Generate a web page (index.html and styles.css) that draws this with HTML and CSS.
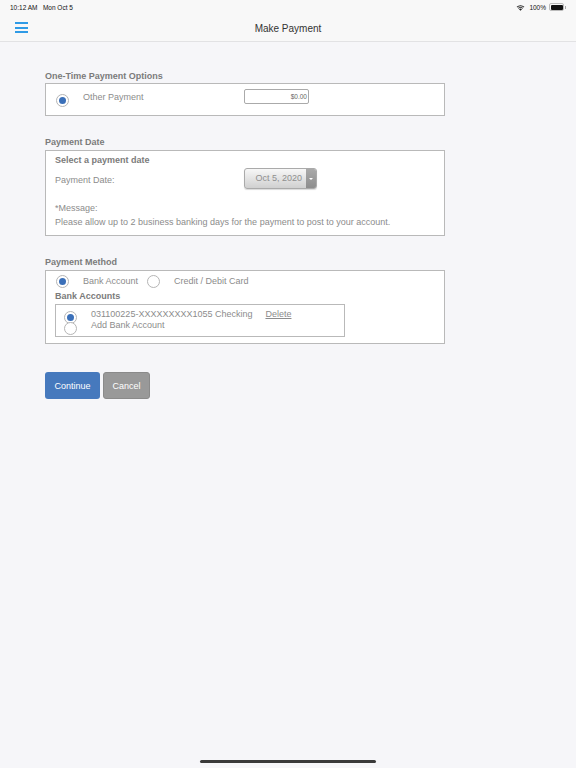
FILE: index.html
```html
<!DOCTYPE html>
<html>
<head>
<meta charset="utf-8">
<link rel="stylesheet" href="styles.css">
</head>
<body>
<div class="status">
  <span class="time">10:12 AM&nbsp;&nbsp;&nbsp;Mon Oct 5</span>
  <span class="status-right">
    <svg class="wifi" width="9" height="7" viewBox="0 0 18 14"><path d="M9 13.5 L6 10.3 A4.4 4.4 0 0 1 12 10.3 Z" fill="#222"/><path d="M3.9 8.2 A7.4 7.4 0 0 1 14.1 8.2 L12.8 9.5 A5.6 5.6 0 0 0 5.2 9.5 Z" fill="#222"/><path d="M1.3 5.6 A11 11 0 0 1 16.7 5.6 L15.4 6.9 A9.2 9.2 0 0 0 2.6 6.9 Z" fill="#222"/></svg>
    <span class="batt-text">100%</span>
    <span class="battery"><span class="battery-fill"></span></span><span class="battery-cap"></span>
  </span>
</div>
<div class="navbar">
  <div class="hamburger"><span></span><span></span><span></span></div>
  <div class="nav-title">Make Payment</div>
</div>
<main class="content">
  <div class="section-label first">One-Time Payment Options</div>
  <div class="box box-options">
    <span class="radio checked"></span>
    <span class="opt-label">Other Payment</span>
    <span class="amount">$0.00</span>
  </div>

  <div class="section-label">Payment Date</div>
  <div class="box box-date">
    <div class="bold-label">Select a payment date</div>
    <div class="date-row">
      <span class="date-label">Payment Date:</span>
      <span class="date-btn"><span class="date-text">Oct 5, 2020</span><span class="date-arrow"><span class="tri"></span></span></span>
    </div>
    <div class="msg">*Message:</div>
    <div class="msg2">Please allow up to 2 business banking days for the payment to post to your account.</div>
  </div>

  <div class="section-label">Payment Method</div>
  <div class="box box-method">
    <div class="method-row">
      <span class="radio checked"></span>
      <span class="opt-label bank-label">Bank Account</span>
      <span class="radio"></span>
      <span class="opt-label">Credit / Debit Card</span>
    </div>
    <div class="bold-label accounts-label">Bank Accounts</div>
    <div class="inner-box">
      <div class="acct-row">
        <span class="radio checked"></span>
        <span class="acct-text">031100225-XXXXXXXXX1055 Checking</span>
        <span class="delete">Delete</span>
      </div>
      <div class="acct-row acct-row2">
        <span class="radio"></span>
        <span class="acct-text">Add Bank Account</span>
      </div>
    </div>
  </div>

  <div class="buttons">
    <span class="btn btn-continue">Continue</span>
    <span class="btn btn-cancel">Cancel</span>
  </div>
</main>
<div class="home-indicator"></div>
</body>
</html>
```
FILE: styles.css
```css
html, body {
  margin: 0;
  padding: 0;
}
body {
  width: 576px;
  height: 768px;
  background: #f6f6f9;
  font-family: "Liberation Sans", Arial, sans-serif;
  color: #8c8c8c;
  position: relative;
  overflow: hidden;
}
.status {
  height: 14px;
  display: flex;
  align-items: center;
  justify-content: space-between;
  padding: 0 10px 0 10px;
  background: #f8f8f8;
  font-size: 6.5px;
  color: #111;
}
.time {
  padding-top: 1px;
}
.status-right {
  display: flex;
  align-items: center;
  gap: 2px;
}
.wifi {
  margin-right: 2px;
}
.battery {
  width: 12px;
  height: 5px;
  border: 1px solid #bbb;
  border-radius: 2px;
  padding: 0.5px;
  display: inline-flex;
  margin-left: 1px;
}
.battery-fill {
  flex: 1;
  background: #111;
  border-radius: 1px;
}
.battery-cap {
  width: 1px;
  height: 3px;
  background: #aaa;
  margin-left: -1px;
}
.navbar {
  height: 27px;
  background: #f8f8f8;
  border-bottom: 1px solid #e2e2e4;
  display: flex;
  align-items: center;
  position: relative;
}
.hamburger {
  margin-left: 15px;
  width: 13px;
  display: flex;
  flex-direction: column;
  gap: 2.5px;
}
.hamburger span {
  display: block;
  height: 2px;
  background: #2f9be6;
}
.nav-title {
  position: absolute;
  left: 0;
  right: 0;
  text-align: center;
  font-size: 10px;
  color: #333;
  top: 8.5px;
}
.content {
  padding-left: 45px;
  width: 400px;
}
.section-label {
  font-size: 9px;
  font-weight: bold;
  color: #7b7b7b;
  height: 10px;
  line-height: 10px;
  margin-top: 21px;
  margin-bottom: 3px;
}
.section-label.first {
  margin-top: 29px;
  margin-bottom: 2px;
}
.box {
  border: 1px solid #b9b9b9;
  background: #fff;
  box-sizing: border-box;
  width: 400px;
}
.box-options {
  height: 33px;
  display: flex;
  align-items: center;
  padding-left: 10px;
  padding-top: 1px;
}
.radio {
  width: 11px;
  height: 11px;
  border: 1px solid #b5b5b5;
  border-radius: 50%;
  background: #fff;
  display: inline-flex;
  align-items: center;
  justify-content: center;
  flex: none;
}
.radio.checked::after {
  content: "";
  width: 7px;
  height: 7px;
  border-radius: 50%;
  background: #3b70b9;
}
.opt-label {
  font-size: 9px;
  margin-left: 14px;
  color: #8c8c8c;
}
.box-options .opt-label {
  width: 161px;
  margin-top: -7px;
}
.amount {
  width: 65px;
  height: 15px;
  box-sizing: border-box;
  border: 1px solid #aaa;
  border-radius: 2px;
  font-size: 6.5px;
  color: #666;
  text-align: right;
  line-height: 13px;
  padding-right: 1px;
  margin-top: -7px;
}
.box-date {
  height: 86px;
  padding: 4px 9px 0 9px;
}
.bold-label {
  font-size: 9px;
  font-weight: bold;
  color: #7b7b7b;
  line-height: 10px;
}
.date-row {
  display: flex;
  align-items: center;
  margin-top: 3px;
  height: 21px;
}
.date-label {
  font-size: 9px;
  width: 189px;
  padding-top: 3px;
}
.date-btn {
  width: 73px;
  height: 21px;
  box-sizing: border-box;
  border: 1px solid #aaa;
  border-radius: 3px;
  display: flex;
  background: linear-gradient(#f7f7f7, #d0d0d0);
  box-shadow: 0 1px 1px rgba(0,0,0,0.15);
  overflow: hidden;
}
.date-text {
  flex: 1;
  font-size: 9px;
  color: #8f8f8f;
  text-align: right;
  line-height: 19px;
  padding-right: 4px;
}
.date-arrow {
  width: 10px;
  background: linear-gradient(#aaa, #8d8d8d);
  display: flex;
  align-items: center;
  justify-content: center;
}
.tri {
  width: 0;
  height: 0;
  border-left: 2px solid transparent;
  border-right: 2px solid transparent;
  border-top: 2px solid #fff;
}
.msg {
  font-size: 9px;
  margin-top: 14px;
  line-height: 10px;
}
.msg2 {
  font-size: 9px;
  margin-top: 4px;
  line-height: 10px;
}
.box-method {
  height: 74px;
  padding: 4px 9px 0 9px;
}
.method-row {
  display: flex;
  align-items: center;
  height: 13px;
  padding-left: 1px;
}
.method-row .opt-label {
  margin-top: -2px;
}
.method-row .bank-label {
  width: 64px;
}
.accounts-label {
  margin-top: 3px;
}
.inner-box {
  margin-top: 3px;
  width: 290px;
  height: 33px;
  box-sizing: border-box;
  border: 1px solid #b9b9b9;
  padding: 4px 0 0 8px;
}
.acct-row {
  display: flex;
  align-items: flex-start;
  height: 11px;
}
.acct-row .radio {
  margin-top: 2px;
}
.acct-text {
  font-size: 9px;
  margin-left: 14px;
  line-height: 10px;
}
.delete {
  font-size: 9px;
  line-height: 10px;
  text-decoration: underline;
  margin-left: 13px;
}
.buttons {
  display: flex;
  gap: 3px;
  margin-top: 28px;
}
.btn {
  height: 27px;
  border-radius: 3px;
  color: #fff;
  font-size: 9px;
  display: flex;
  align-items: center;
  justify-content: center;
  box-sizing: border-box;
}
.btn-continue {
  width: 55px;
  background: #4679bd;
}
.btn-cancel {
  width: 47px;
  background: #999;
  border: 1px solid #8a8a8a;
}
.home-indicator {
  position: absolute;
  left: 200px;
  top: 760px;
  width: 176px;
  height: 3px;
  border-radius: 2px;
  background: #3a3a3a;
}
```
